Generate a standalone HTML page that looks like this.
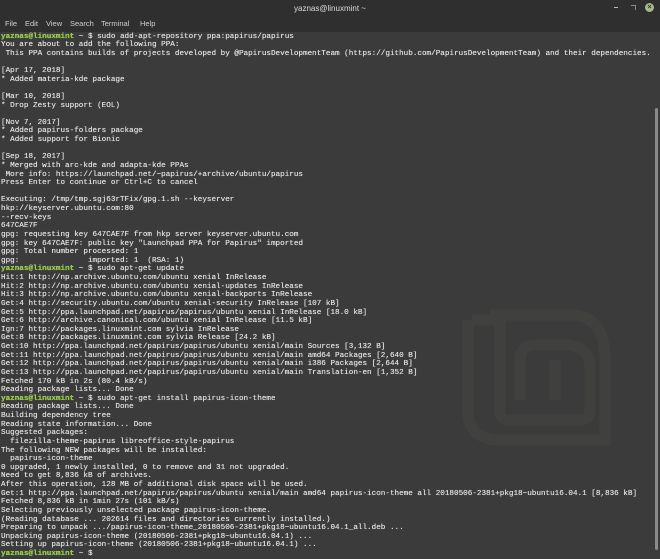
<!DOCTYPE html>
<html><head><meta charset="utf-8"><style>
html,body{margin:0;padding:0;width:660px;height:558px;overflow:hidden;background:#3b3b3b;}
#title{position:absolute;left:0;top:0;width:660px;height:16px;background:#2f2f2f;color:#dcdcdc;font:8px "Liberation Sans",sans-serif;text-align:center;line-height:17px;}
#menu{position:absolute;left:0;top:16px;width:660px;height:16px;background:#2f2f2f;color:#cfcfcf;font:7.5px "Liberation Sans",sans-serif;line-height:16px;}
#menu span{position:absolute;top:0}
#term{position:absolute;left:1px;top:32.5px;margin:0;font:7.64px/8.63px "Liberation Mono",monospace;color:#e2e2e2;white-space:pre;text-shadow:0 0 0.4px #e2e2e2;}
.p{color:#8ed12e;font-weight:bold}
#sb{position:absolute;left:655px;top:108px;width:3px;height:442px;background:#8a8a8a;border-radius:2px}
</style></head><body>
<div id="title">yaznas@linuxmint ~</div>
<div style="position:absolute;left:614px;top:7px;width:4px;height:1px;background:#bbb"></div>
<div style="position:absolute;left:631px;top:5px;width:4px;height:4px;border:1px solid #888;border-width:1px 1px 0 0"></div>
<div style="position:absolute;left:645px;top:3px;width:9px;height:9px;border-radius:50%;background:#a8b78a;color:#333;font:bold 7px/9px 'Liberation Sans',sans-serif;text-align:center">×</div>
<div id="menu"><span style="left:5px">File</span><span style="left:25px">Edit</span><span style="left:46px">View</span><span style="left:70px">Search</span><span style="left:101px">Terminal</span><span style="left:140px">Help</span></div>
<svg style="position:absolute;left:460px;top:300px" width="160" height="148" viewBox="0 0 160 148">
<g fill="none" stroke="#40413e" stroke-width="11">
<path d="M12 20 H40 V110 Q40 120 50 120 H120 Q130 120 130 110 V70 Q130 45 105 45 H75 Q60 45 60 60 V100"/>
<path d="M95 60 V100"/>
<path d="M30 15 H110 Q145 15 145 60 V140 H40 Q8 140 8 110 V20"/>
</g></svg>
<div id="sb"></div>
<pre id="term"><span class="p">yaznas@linuxmint</span> ~ $ sudo add-apt-repository ppa:papirus/papirus
You are about to add the following PPA:
 This PPA contains builds of projects developed by @PapirusDevelopmentTeam (https://github.com/PapirusDevelopmentTeam) and their dependencies.

[Apr 17, 2018]
* Added materia-kde package

[Mar 10, 2018]
* Drop Zesty support (EOL)

[Nov 7, 2017]
* Added papirus-folders package
* Added support for Bionic

[Sep 18, 2017]
* Merged with arc-kde and adapta-kde PPAs
 More info: https://launchpad.net/~papirus/+archive/ubuntu/papirus
Press Enter to continue or Ctrl+C to cancel

Executing: /tmp/tmp.sgj63rTFix/gpg.1.sh --keyserver
hkp://keyserver.ubuntu.com:80
--recv-keys
647CAE7F
gpg: requesting key 647CAE7F from hkp server keyserver.ubuntu.com
gpg: key 647CAE7F: public key "Launchpad PPA for Papirus" imported
gpg: Total number processed: 1
gpg:               imported: 1  (RSA: 1)
<span class="p">yaznas@linuxmint</span> ~ $ sudo apt-get update
Hit:1 http://np.archive.ubuntu.com/ubuntu xenial InRelease
Hit:2 http://np.archive.ubuntu.com/ubuntu xenial-updates InRelease
Hit:3 http://np.archive.ubuntu.com/ubuntu xenial-backports InRelease
Get:4 http://security.ubuntu.com/ubuntu xenial-security InRelease [107 kB]
Get:5 http://ppa.launchpad.net/papirus/papirus/ubuntu xenial InRelease [18.0 kB]
Get:6 http://archive.canonical.com/ubuntu xenial InRelease [11.5 kB]
Ign:7 http://packages.linuxmint.com sylvia InRelease
Get:8 http://packages.linuxmint.com sylvia Release [24.2 kB]
Get:10 http://ppa.launchpad.net/papirus/papirus/ubuntu xenial/main Sources [3,132 B]
Get:11 http://ppa.launchpad.net/papirus/papirus/ubuntu xenial/main amd64 Packages [2,640 B]
Get:12 http://ppa.launchpad.net/papirus/papirus/ubuntu xenial/main i386 Packages [2,644 B]
Get:13 http://ppa.launchpad.net/papirus/papirus/ubuntu xenial/main Translation-en [1,352 B]
Fetched 170 kB in 2s (80.4 kB/s)
Reading package lists... Done
<span class="p">yaznas@linuxmint</span> ~ $ sudo apt-get install papirus-icon-theme
Reading package lists... Done
Building dependency tree
Reading state information... Done
Suggested packages:
  filezilla-theme-papirus libreoffice-style-papirus
The following NEW packages will be installed:
  papirus-icon-theme
0 upgraded, 1 newly installed, 0 to remove and 31 not upgraded.
Need to get 8,836 kB of archives.
After this operation, 128 MB of additional disk space will be used.
Get:1 http://ppa.launchpad.net/papirus/papirus/ubuntu xenial/main amd64 papirus-icon-theme all 20180506-2381+pkg18~ubuntu16.04.1 [8,836 kB]
Fetched 8,836 kB in 1min 27s (101 kB/s)
Selecting previously unselected package papirus-icon-theme.
(Reading database ... 202614 files and directories currently installed.)
Preparing to unpack .../papirus-icon-theme_20180506-2381+pkg18~ubuntu16.04.1_all.deb ...
Unpacking papirus-icon-theme (20180506-2381+pkg18~ubuntu16.04.1) ...
Setting up papirus-icon-theme (20180506-2381+pkg18~ubuntu16.04.1) ...
<span class="p">yaznas@linuxmint</span> ~ $</pre>
</body></html>
